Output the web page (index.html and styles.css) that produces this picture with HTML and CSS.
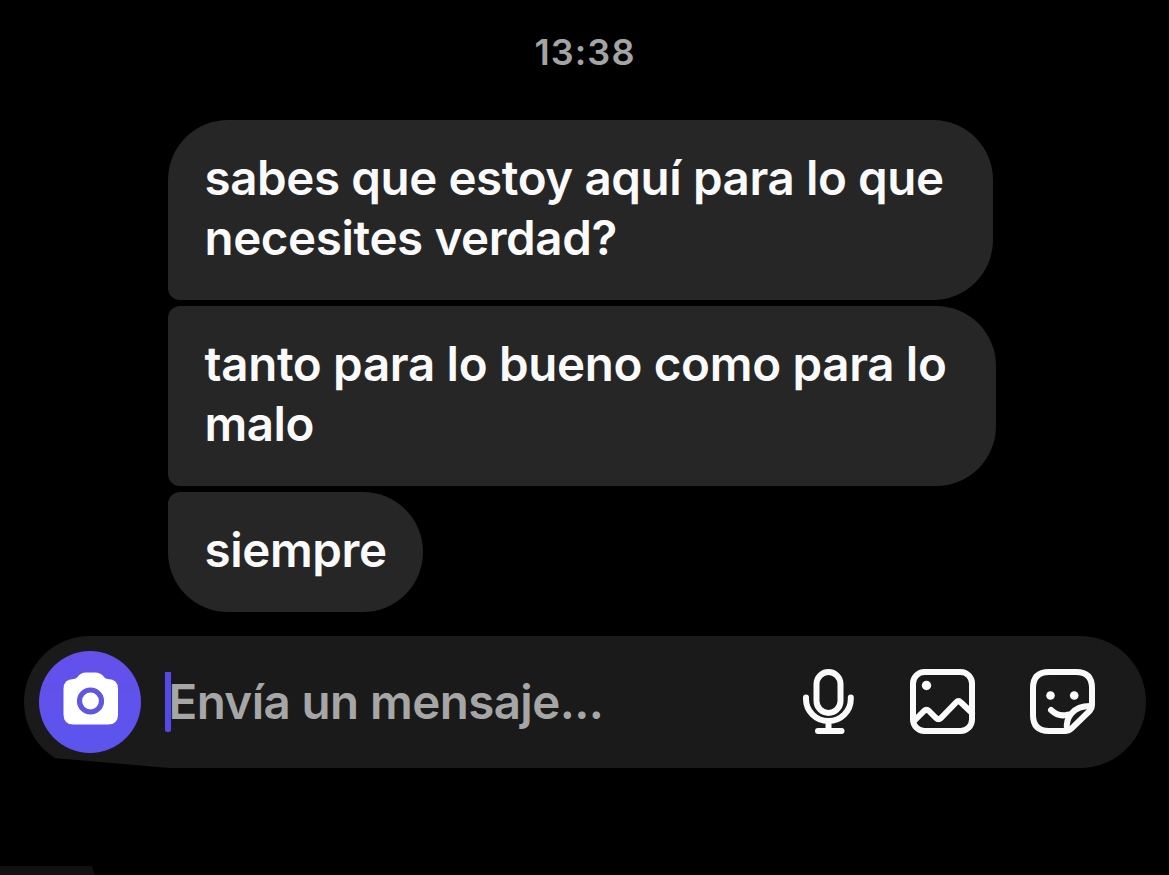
FILE: index.html
```html
<!DOCTYPE html>
<html lang="es">
<head>
<meta charset="utf-8">
<title>Chat</title>
<link rel="stylesheet" href="styles.css">
</head>
<body>
<main class="chat">
  <time class="timestamp">13:38</time>
  <section class="messages">
    <p class="bubble bubble-first">sabes que estoy aquí para lo que<br>necesites verdad?</p>
    <p class="bubble bubble-middle"><span class="wide-line">tanto para lo bueno como para lo</span><br><span class="short-line">malo</span></p>
    <p class="bubble bubble-last">siempre</p>
  </section>
  <div class="composer">
    <button class="camera" aria-label="Cámara">
      <svg width="102" height="102" viewBox="0 0 102 102">
        <path fill="#fff" d="M47 21.500H56Q62 21.500 65 26Q66.500 28 69 28Q79 28 79 38V63.500Q79 73.500 69 73.500H34.500Q24.500 73.500 24.500 63.500V38Q24.500 28 34.500 28Q37 28 38.500 26Q41.500 21.500 47 21.500Z"/>
        <circle cx="51.500" cy="50" r="11" fill="none" stroke="#6156df" stroke-width="5.200"/>
      </svg>
    </button>
    <span class="caret"></span>
    <span class="placeholder">Envía un mensaje...</span>
    <div class="actions">
      <svg class="mic" width="52" height="66" viewBox="0 0 52 66">
        <rect x="13.500" y="3" width="24" height="41" rx="12"/>
        <path d="M3 28.500V30A22.400 22 0 0 0 47.800 30V28.500M25.500 52V61.500M15 62H38.500"/>
      </svg>
      <svg class="photo" width="66" height="66" viewBox="0 0 66 66">
        <rect x="3" y="3" width="59" height="59" rx="11.500"/>
        <path d="M4 52L14 42Q16.500 39.800 19 42L26 49Q28.500 51.200 31 49L46 33.500Q48.500 31 51 33.500L62 44"/>
        <circle class="dot" cx="16.500" cy="16.500" r="4.700"/>
      </svg>
      <svg class="sticker" width="66" height="66" viewBox="0 0 66 66">
        <path d="M62 36V19Q62 3 46 3H19Q3 3 3 19V46Q3 62 19 62H36Q39 62 41 60L60 41.500Q62 39 62 36Z"/>
        <path d="M21 41Q29 48.500 38 45.500M37 60C35.500 49 43 37 60 37"/>
        <circle class="dot" cx="20.500" cy="26.500" r="4.300"/>
        <circle class="dot" cx="44.200" cy="26.500" r="4.300"/>
      </svg>
    </div>
  </div>
  <div class="bottom-tab"></div>
</main>
</body>
</html>
```
FILE: styles.css
```css
* { box-sizing: border-box; }
body {
  margin: 0;
  background: #000;
  font-family: Inter, "Liberation Sans", sans-serif;
  font-weight: 600;
}
.chat {
  display: flex;
  flex-direction: column;
  height: 875px;
  overflow: hidden;
}
.timestamp {
  height: 120px;
  padding: 29px 0 0 1px;
  text-align: center;
  font-size: 36px;
  font-weight: 580;
  line-height: 46px;
  letter-spacing: 1.100px;
  color: #a4a4a4;
}
.messages {
  display: flex;
  flex-direction: column;
  align-items: flex-start;
  gap: 6px;
  padding-left: 168px;
}
.bubble {
  margin: 0;
  padding: 28px 0 32px 36.500px;
  background: #262626;
  color: #fafafa;
  font-size: 47.500px;
  line-height: 60px;
  letter-spacing: -0.400px;
  white-space: nowrap;
}
.bubble-first { width: 825px; border-radius: 60px 60px 60px 12px; }
.bubble-middle { width: 828px; border-radius: 12px 60px 60px 12px; }
.bubble-last { width: 255px; border-radius: 12px 60px 60px 60px; }
.wide-line { letter-spacing: -0.320px; }
.short-line { letter-spacing: -0.500px; }
.composer {
  display: flex;
  align-items: center;
  width: 1122px;
  height: 132px;
  margin: 24px 0 0 24px;
  padding: 0 50px 0 15px;
  border-radius: 66px;
  background: #1a1a1a;
  clip-path: polygon(0 0, 100% 0, 100% 100%, 145px 100%, 30px 122px, 0 122px);
}
.camera {
  width: 102px;
  height: 102px;
  padding: 0;
  border: 0;
  border-radius: 50%;
  background: linear-gradient(#6450ea, #5c54ee);
}
.camera svg { display: block; }
.caret {
  width: 6px;
  height: 60px;
  margin-left: 24px;
  border-radius: 0 0 2px 2px;
  background: #5548e8;
}
.placeholder {
  margin-left: -2.500px;
  font-size: 47.500px;
  line-height: 60px;
  letter-spacing: -0.580px;
  white-space: nowrap;
  color: #a6a6a6;
}
.actions {
  display: flex;
  margin-left: auto;
  fill: none;
  stroke: #fafafa;
  stroke-width: 6;
  stroke-linecap: round;
  stroke-linejoin: round;
}
.photo { margin-left: 55px; }
.sticker { margin-left: 54px; }
.dot { fill: #fafafa; stroke: none; }
.bottom-tab {
  width: 95px;
  height: 9px;
  margin-top: auto;
  background: #111;
  clip-path: polygon(0 0, 92px 0, 95px 100%, 0 100%);
}
```
